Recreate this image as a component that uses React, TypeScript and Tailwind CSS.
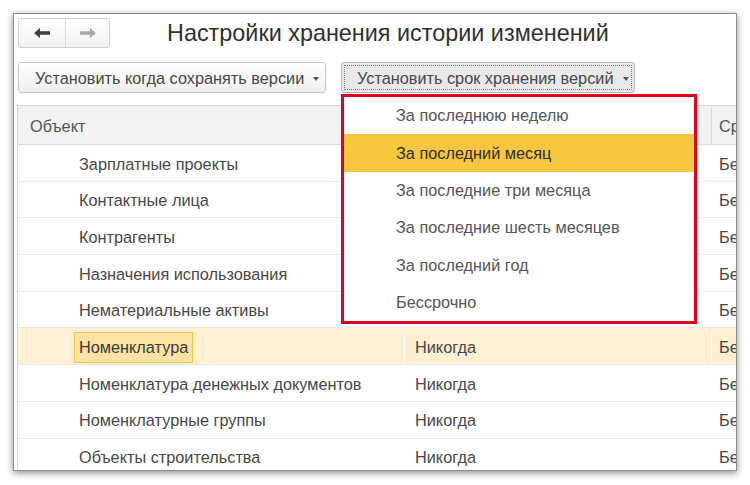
import React from "react";

const ROWS = [
  "Зарплатные проекты",
  "Контактные лица",
  "Контрагенты",
  "Назначения использования",
  "Нематериальные активы",
  "Номенклатура",
  "Номенклатура денежных документов",
  "Номенклатурные группы",
  "Объекты строительства",
];

const MENU = [
  "За последнюю неделю",
  "За последний месяц",
  "За последние три месяца",
  "За последние шесть месяцев",
  "За последний год",
  "Бессрочно",
];

function Caret() {
  return <span className="inline-block w-0 h-0 border-l-[3.5px] border-r-[3.5px] border-t-[4px] border-l-transparent border-r-transparent border-t-[#555] ml-[9px] mt-[2px]" />;
}

function Arrow({ dir, color }: { dir: "left" | "right"; color: string }) {
  return (
    <svg width="18" height="12" viewBox="0 0 18 12" style={{ transform: dir === "right" ? "scaleX(-1)" : undefined }}>
      <path d="M1 6 L7 1 L7 4.3 L17 4.3 L17 7.7 L7 7.7 L7 11 Z" fill={color} />
    </svg>
  );
}

export default function App() {
  return (
    <div className="w-[750px] h-[485px] bg-white pl-[13px] pt-[13px] overflow-hidden" style={{ fontFamily: '"Liberation Sans", Arial, sans-serif' }}>
      <div className="relative w-[724px] h-[458px] border border-[#8c8c8c] bg-white overflow-hidden shadow-[0_2px_7px_rgba(0,0,0,0.45)]">
        {/* title bar */}
        <div className="flex items-center mt-[4px] ml-[4px]">
          <div className="flex w-[92px] h-[30px] border border-[#cfcfcf] rounded-[2px] bg-gradient-to-b from-white to-[#f1f1f1]">
            <div className="w-[47px] flex items-center justify-center border-r border-[#dcdcdc]">
              <Arrow dir="left" color="#3f3f3f" />
            </div>
            <div className="flex-1 flex items-center justify-center">
              <Arrow dir="right" color="#a9a9a9" />
            </div>
          </div>
          <div className="ml-[57px] mt-[2px] text-[23.4px] text-[#2f2f2f] leading-none">Настройки хранения истории изменений</div>
        </div>

        {/* command bar */}
        <div className="flex mt-[14px] ml-[4px] gap-[15px] text-[16.3px] text-[#474747]">
          <div className="w-[308px] h-[31px] flex items-center pl-[16px] pt-[1px] border border-[#c6c6c6] rounded-[3px] bg-gradient-to-b from-white to-[#efefef]">
            Установить когда сохранять версии
            <Caret />
          </div>
          <div className="w-[294px] h-[31px] p-[2px] border border-[#b9b9b9] rounded-[3px] bg-[#e9e9e9]">
            <div className="h-full flex items-center pl-[12px] pt-[1px] border border-dotted border-[#777]">
              Установить срок хранения версий
              <Caret />
            </div>
          </div>
        </div>

        {/* table */}
        <div className="mt-[12px] ml-[3px] w-[900px] border-l border-t border-[#d4d4d4] text-[16.3px] text-[#474747]">
          <div className="flex h-[39px] pt-[2px] bg-[#f2f2f2] border-b border-[#d9d9d9]">
            <div className="w-[386px] flex items-center pl-[12px] text-[#555]">Объект</div>
            <div className="w-[307px] border-l border-[#d9d9d9]" />
            <div className="flex-1 flex items-center pl-[7px] border-l border-[#d9d9d9] text-[#555]">Срок хранения</div>
          </div>
          {ROWS.map((r, i) => {
            const sel = i === 5;
            return (
              <div key={r} className={`flex h-[36.7px] pt-[2px] border-b border-[#e7e7e7] ${sel ? "bg-[#fdf0d3]" : ""}`}>
                <div className="w-[386px] flex items-center pl-[56px]">
                  {sel ? (
                    <span className="h-[31px] flex items-center px-[4px] border border-[#f0c54c] bg-[#fbe3a3] text-[#3a3a3a]">{r}</span>
                  ) : (
                    <span className="pl-[5px]">{r}</span>
                  )}
                </div>
                <div className="w-[307px] flex items-center pl-[10px] border-l border-white">{i >= 5 ? "Никогда" : ""}</div>
                <div className="flex-1 flex items-center pl-[7px] border-l border-white">Бессрочно</div>
              </div>
            );
          })}
        </div>

        {/* dropdown */}
        <div className="absolute left-[327px] top-[80px] w-[356px] h-[230px] border-[3px] border-[#e2001b] bg-white text-[16.3px] text-[#555]">
          {MENU.map((m, i) => (
            <div key={m} className={`h-[37.3px] flex items-center pl-[52px] ${i === 1 ? "bg-[#f5c73e] text-[#2e2e2e]" : ""}`}>
              {m}
            </div>
          ))}
        </div>
      </div>
    </div>
  );
}
